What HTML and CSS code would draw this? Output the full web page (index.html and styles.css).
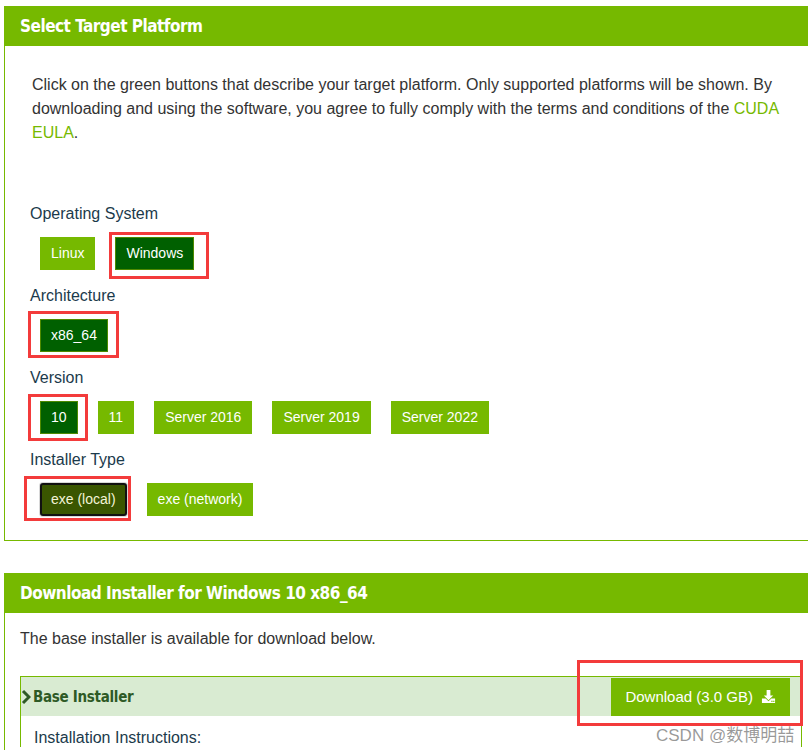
FILE: index.html
```html
<!DOCTYPE html>
<html lang="en">
<head>
  <meta charset="UTF-8" />
  <meta name="viewport" content="width=device-width, initial-scale=1" />
  <title>CUDA Toolkit Downloads</title>
  <link rel="stylesheet" href="styles.css">
</head>
<body>
  <div class="page">
    <section class="panel panel-target">
      <h2 class="panel-title">Select Target Platform</h2>
      <div class="panel-body">
        <p class="intro">Click on the green buttons that describe your target platform. Only supported platforms will be shown. By downloading and using the software, you agree to fully comply with the terms and conditions of the <a href="#">CUDA EULA</a>.</p>

        <div class="group">
          <div class="group-label">Operating System</div>
          <div class="options">
            <span class="opt">Linux</span>
            <span class="opt selected">Windows</span>
          </div>
        </div>

        <div class="group">
          <div class="group-label">Architecture</div>
          <div class="options">
            <span class="opt selected">x86_64</span>
          </div>
        </div>

        <div class="group">
          <div class="group-label">Version</div>
          <div class="options">
            <span class="opt selected">10</span>
            <span class="opt">11</span>
            <span class="opt">Server 2016</span>
            <span class="opt">Server 2019</span>
            <span class="opt">Server 2022</span>
          </div>
        </div>

        <div class="group">
          <div class="group-label">Installer Type</div>
          <div class="options">
            <span class="opt focused">exe (local)</span>
            <span class="opt">exe (network)</span>
          </div>
        </div>
      </div>
    </section>

    <section class="panel panel-download">
      <h2 class="panel-title">Download Installer for Windows 10 x86_64</h2>
      <div class="panel-body">
        <p class="note">The base installer is available for download below.</p>
        <div class="installer">
          <div class="installer-head">
            <span class="installer-name">
              <svg class="chev" width="10" height="16" viewBox="0 0 10 16">
                <path d="M2 2l6 6-6 6" fill="none" stroke="#2e5a26" stroke-width="3"/>
              </svg>Base Installer</span>
            <a class="btn-download" href="#">Download (3.0 GB)
              <svg width="15" height="15" viewBox="0 0 16 16">
                <path d="M6 1h4v6h3l-5 5-5-5h3z" fill="#fff"/>
                <path d="M1 10h4l3 3 3-3h4v5H1z" fill="#fff"/>
                <rect x="11" y="12.5" width="1.3" height="1.3" fill="#76b900"/>
                <rect x="13" y="12.5" width="1.3" height="1.3" fill="#76b900"/>
              </svg>
            </a>
          </div>
          <div class="installer-body">Installation Instructions:</div>
        </div>
      </div>
    </section>

    <!-- annotation boxes from the screenshot -->
    <span class="mark" style="left:109px;top:232px;width:100px;height:47px"></span>
    <span class="mark" style="left:28px;top:311px;width:91px;height:47px"></span>
    <span class="mark" style="left:28px;top:394px;width:60px;height:47px"></span>
    <span class="mark" style="left:24px;top:476px;width:107px;height:45px"></span>
    <span class="mark" style="left:577px;top:660px;width:226px;height:66px"></span>
    <span class="watermark">CSDN @数博明喆</span>
  </div>
</body>
</html>
```

FILE: styles.css
```css
html, body {
  margin: 0;
  padding: 0;
  overflow: hidden;
  font-family: "Liberation Sans", Arial, sans-serif;
  background: #fff;
}

.page {
  position: relative;
  padding: 6px 0 0 4px;
  height: 750px;
}

.panel {
  width: 820px;
  border: 1px solid #76b900;
  border-top: none;
  border-right: none;
}

.panel-title {
  margin: 0;
  height: 40px;
  line-height: 40px;
  padding-left: 15px;
  background-color: #76b900;
  color: #fff;
  font-family: "DejaVu Sans Condensed", "Liberation Sans", sans-serif;
  font-size: 17px;
  letter-spacing: -0.5px;
  font-weight: bold;
}

.panel-target .panel-body {
  padding: 27px 0 24px 25px;
}

.intro {
  margin: 0 0 58px 2px;
  width: 752px;
  font-size: 16px;
  line-height: 24px;
  color: #333;
}

.intro a {
  color: #76b900;
  text-decoration: none;
}

.group {
  margin-bottom: 15px;
}

.group:last-child {
  margin-bottom: 0;
}

.group-label {
  font-size: 16px;
  line-height: 22px;
  color: #1b3a4b;
  margin-bottom: 12px;
}

.options {
  display: flex;
  gap: 20px;
  padding-left: 10px;
}

.opt {
  display: inline-block;
  height: 33px;
  line-height: 33px;
  padding: 0 11px;
  box-sizing: border-box;
  background-color: #76b900;
  color: #fff;
  font-size: 14px;
}

.opt.selected {
  background-color: #006000;
  border: 1px solid #4e8a00;
  line-height: 31px;
  padding: 0 10px;
}

.opt.focused {
  background-color: #3a5600;
  border: 2px solid #111;
  border-radius: 3px;
  box-shadow: 0 0 0 1px #d8d8d8;
  line-height: 29px;
  padding: 0 9px;
  color: #f4f4d8;
}

.panel-download {
  margin-top: 32px;
  height: 200px;
}

.panel-download .panel-body {
  padding: 14px 0 0 15px;
}

.note {
  margin: 0 0 25px;
  font-size: 16px;
  line-height: 24px;
  color: #333;
}

.installer {
  width: 780px;
  border: 1px solid #76b900;
  border-bottom: none;
}

.installer-head {
  display: flex;
  justify-content: space-between;
  align-items: center;
  height: 39px;
  background-color: #d9ebd2;
  padding-right: 11px;
}

.installer-name {
  display: flex;
  align-items: center;
  font-family: "DejaVu Sans Condensed", "Liberation Sans", sans-serif;
  font-weight: bold;
  font-size: 15px;
  letter-spacing: -0.3px;
  color: #2e5a26;
}

.chev {
  margin: 0 2px 0 0;
}

.btn-download {
  display: flex;
  align-items: center;
  gap: 8px;
  height: 38px;
  padding: 0 14px;
  background-color: #76b900;
  color: #fff;
  font-size: 15px;
  text-decoration: none;
}

.installer-body {
  padding: 13px 0 0 13px;
  font-size: 16px;
  color: #1b3a4b;
}

.mark {
  position: absolute;
  box-sizing: border-box;
  border: 3px solid #f33b3b;
}

.watermark {
  position: absolute;
  left: 656px;
  top: 721px;
  font-family: "Liberation Sans", "Noto Sans CJK SC", sans-serif;
  font-size: 17px;
  color: rgba(120, 120, 120, 0.75);
}
```
